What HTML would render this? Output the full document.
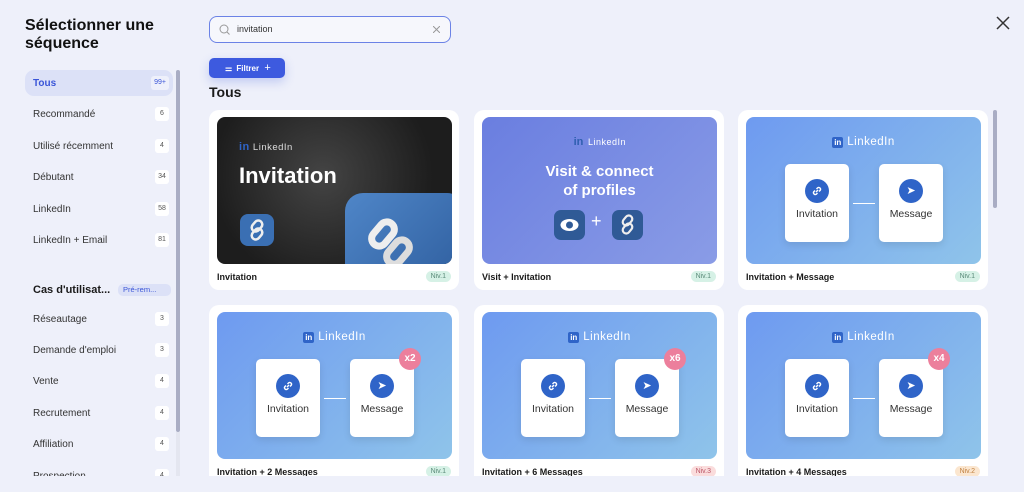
<!DOCTYPE html>
<html><head><meta charset="utf-8"><style>
*{box-sizing:border-box;margin:0;padding:0}
body{width:1024px;height:492px;overflow:hidden;background:#eef0fa;font-family:"Liberation Sans",sans-serif;position:relative;color:#1a1a1a}
.h1{position:absolute;left:25px;top:17px;font-size:16px;font-weight:bold;line-height:18px;color:#111}
.nav{position:absolute;left:25px;width:148px;height:26px;border-radius:9px;font-size:10px;color:#333;line-height:28px;padding-left:8px}
.nav .c{position:absolute;right:4px;top:6px;height:14px;min-width:14px;padding:0 3px;line-height:14px;font-size:7px;background:#fff;border-radius:3px;text-align:center;color:#555}
.act{background:#dce1f7;color:#3a55d8;font-weight:bold}
.act .c{background:#eef0fb;color:#3a55d8;font-weight:normal}
.sb{position:absolute;left:176px;top:70px;width:4px;height:362px;background:#a9adc4;border-radius:2px}
.sbt{position:absolute;left:176px;top:432px;width:4px;height:44px;background:#e4e6f0}
.search{position:absolute;left:209px;top:16px;width:242px;height:27px;border:1.5px solid #6b82e6;border-radius:8px;background:#f6f7fc}
.search span{position:absolute;left:27px;top:7px;font-size:9px;color:#333}
.btn{position:absolute;left:209px;top:58px;width:76px;height:20px;background:#3d5adf;border-radius:5px;color:#fff;font-size:8px;font-weight:bold;line-height:20px;box-shadow:0 4px 10px rgba(61,90,223,.25)}
.tous{position:absolute;left:209px;top:84px;font-size:14px;font-weight:bold}
.card{position:absolute;width:250px;height:180px;background:#fff;border-radius:10px}
.img{position:absolute;left:8px;top:7px;width:235px;height:147px;border-radius:8px;overflow:hidden}
.t{position:absolute;left:8px;top:162px;font-size:9px;font-weight:bold}
.niv{position:absolute;right:8px;top:161px;height:11px;padding:0 5px;border-radius:6px;font-size:7px;line-height:11px;background:#d6f1e6;color:#5a8a78}
.blue{background:linear-gradient(135deg,#6e9af0,#8fc4ea)}
.li{position:absolute;top:19px;left:0;width:100%;text-align:center;color:#fff;font-size:11.5px;letter-spacing:.5px}
.li b{display:inline-block;width:11px;height:11px;background:#2f64c8;border-radius:2px;font-size:8px;line-height:11px;margin-right:4px;vertical-align:0;letter-spacing:0}
.box{position:absolute;top:47px;width:64px;height:78px;background:#fff;border-radius:5px;box-shadow:0 3px 8px rgba(0,0,0,.1);text-align:center;font-size:10.5px;color:#333}
.box i{display:block;width:24px;height:24px;margin:15px auto 5px;background:#2f64c8;border-radius:50%;color:#fff;font-style:normal;font-size:11px;line-height:24px}
.box svg{margin-top:6px}
.line{position:absolute;left:107px;top:86px;width:22px;height:1px;background:#fff}
.x{position:absolute;left:182px;top:36px;width:22px;height:22px;border-radius:50%;background:#ec7f9c;color:#fff;font-size:10px;font-weight:bold;line-height:22px;text-align:center}
.msb{position:absolute;left:993px;top:110px;width:4px;height:98px;background:#a9adc4;border-radius:2px}
</style></head><body>
<div class="h1">Sélectionner une<br>séquence</div>
<div class="nav act" style="top:70px">Tous<span class="c">99+</span></div>
<div class="nav" style="top:101px">Recommandé<span class="c">6</span></div>
<div class="nav" style="top:133px">Utilisé récemment<span class="c">4</span></div>
<div class="nav" style="top:164px">Débutant<span class="c">34</span></div>
<div class="nav" style="top:196px">LinkedIn<span class="c">58</span></div>
<div class="nav" style="top:227px">LinkedIn + Email<span class="c">81</span></div>
<div style="position:absolute;left:33px;top:284px;font-size:11px;font-weight:bold">Cas d'utilisat...</div>
<div style="position:absolute;left:118px;top:284px;width:53px;height:12px;border-radius:5px;background:#dce1f7;color:#3a55d8;font-size:7.5px;line-height:12px;padding-left:5px">Pré-rem...</div>
<div class="nav" style="top:306px">Réseautage<span class="c">3</span></div>
<div class="nav" style="top:337px">Demande d'emploi<span class="c">3</span></div>
<div class="nav" style="top:368px">Vente<span class="c">4</span></div>
<div class="nav" style="top:400px">Recrutement<span class="c">4</span></div>
<div class="nav" style="top:431px">Affiliation<span class="c">4</span></div>
<div class="nav" style="top:463px;height:13px;overflow:hidden">Prospection<span class="c">4</span></div>
<div class="sb"></div><div class="sbt"></div>
<div class="search"><svg style="position:absolute;left:9px;top:7px" width="11" height="11" viewBox="0 0 11 11"><circle cx="5" cy="5" r="4" fill="none" stroke="#999" stroke-width="1"/><path d="M8 8l2.5 2.5" stroke="#999"/></svg><span>invitation</span><svg style="position:absolute;right:10px;top:9px" width="7" height="7"><path d="M0 0L7 7M7 0L0 7" stroke="#999"/></svg></div>
<div class="btn"><span style="margin-left:16px">⚌</span> <span style="margin-left:2px">Filtrer</span> <span style="font-weight:normal;font-size:11px;margin-left:3px">+</span></div>
<div class="tous">Tous</div>
<svg style="position:absolute;left:996px;top:16px" width="14" height="14"><path d="M1 1L13 13M13 1L1 13" stroke="#333" stroke-width="1.5"/></svg>
<div style="position:absolute;left:0;top:0;width:1024px;height:476px;overflow:hidden">
<div class="card" style="left:209px;top:110px"><div class="img" style="background:radial-gradient(circle at 45% 40%,#444,#1d1d1d 70%)">
<div style="position:absolute;left:22px;top:24px;color:#ddd;font-size:9.5px;letter-spacing:.5px"><b style="color:#2f64c8;font-size:11px">in</b> LinkedIn</div>
<div style="position:absolute;left:22px;top:46px;color:#fff;font-size:22px;font-weight:bold">Invitation</div>
<div style="position:absolute;left:128px;top:76px;width:120px;height:100px;border-radius:18px;background:linear-gradient(135deg,#4f86c8,#2d5c9c)"></div>
<div style="position:absolute;left:155px;top:100px;width:22px;height:34px;border:7px solid #eee;border-radius:12px;transform:rotate(40deg)"></div>
<div style="position:absolute;left:170px;top:118px;width:22px;height:34px;border:7px solid #ddd;border-radius:12px;transform:rotate(40deg)"></div>
<div style="position:absolute;left:23px;top:97px;width:34px;height:32px;border-radius:8px;background:#3a6fb3"><svg width="34" height="32" viewBox="0 0 34 32"><rect x="13" y="6" width="8" height="12" rx="4" fill="none" stroke="#eee" stroke-width="2.5" transform="rotate(40 17 12)"/><rect x="13" y="14" width="8" height="12" rx="4" fill="none" stroke="#eee" stroke-width="2.5" transform="rotate(40 17 20)"/></svg></div>
</div><div class="t">Invitation</div><div class="niv">Niv.1</div></div>

<div class="card" style="left:474px;top:110px"><div class="img" style="background:linear-gradient(135deg,#6a7ee0,#8a9ce6)">
<div class="li" style="top:20px;font-size:9px"><b style="background:none;color:#2f5fb0;font-size:11px;font-weight:bold">in</b>LinkedIn</div>
<div style="position:absolute;top:45px;width:100%;text-align:center;color:#fff;font-size:15px;font-weight:bold;line-height:19px">Visit &amp; connect<br>of profiles</div>
<div style="position:absolute;left:72px;top:93px;width:31px;height:30px;border-radius:7px;background:#2f5a96"><svg width="31" height="30"><ellipse cx="15.5" cy="15" rx="9" ry="6" fill="#fff"/><circle cx="15.5" cy="15" r="3.5" fill="#2f5a96"/></svg></div>
<div style="position:absolute;left:109px;top:94px;color:#fff;font-size:18px">+</div>
<div style="position:absolute;left:130px;top:93px;width:31px;height:30px;border-radius:7px;background:#2f5a96"><svg width="31" height="30"><rect x="12" y="5" width="7" height="11" rx="3.5" fill="none" stroke="#eee" stroke-width="2.2" transform="rotate(40 15.5 10.5)"/><rect x="12" y="13" width="7" height="11" rx="3.5" fill="none" stroke="#eee" stroke-width="2.2" transform="rotate(40 15.5 18.5)"/></svg></div>
</div><div class="t">Visit + Invitation</div><div class="niv">Niv.1</div></div>

<div class="card" style="left:738px;top:110px"><div class="img blue"><div class="li"><b>in</b>LinkedIn</div>
<div class="box" style="left:39px"><i><svg width="12" height="12" viewBox="0 0 12 12"><path d="M5 7L7 5M4 5.5L2.8 6.7a1.8 1.8 0 0 0 2.5 2.5L6.5 8M8 6.5l1.2-1.2a1.8 1.8 0 0 0-2.5-2.5L5.5 4" fill="none" stroke="#fff" stroke-width="1.4"/></svg></i>Invitation</div><div class="line"></div><div class="box" style="left:133px"><i>➤</i>Message</div>
</div><div class="t">Invitation + Message</div><div class="niv">Niv.1</div></div>

<div class="card" style="left:209px;top:305px"><div class="img blue"><div class="li"><b>in</b>LinkedIn</div>
<div class="box" style="left:39px"><i><svg width="12" height="12" viewBox="0 0 12 12"><path d="M5 7L7 5M4 5.5L2.8 6.7a1.8 1.8 0 0 0 2.5 2.5L6.5 8M8 6.5l1.2-1.2a1.8 1.8 0 0 0-2.5-2.5L5.5 4" fill="none" stroke="#fff" stroke-width="1.4"/></svg></i>Invitation</div><div class="line"></div><div class="box" style="left:133px"><i>➤</i>Message</div><div class="x">x2</div>
</div><div class="t">Invitation + 2 Messages</div><div class="niv">Niv.1</div></div>

<div class="card" style="left:474px;top:305px"><div class="img blue"><div class="li"><b>in</b>LinkedIn</div>
<div class="box" style="left:39px"><i><svg width="12" height="12" viewBox="0 0 12 12"><path d="M5 7L7 5M4 5.5L2.8 6.7a1.8 1.8 0 0 0 2.5 2.5L6.5 8M8 6.5l1.2-1.2a1.8 1.8 0 0 0-2.5-2.5L5.5 4" fill="none" stroke="#fff" stroke-width="1.4"/></svg></i>Invitation</div><div class="line"></div><div class="box" style="left:133px"><i>➤</i>Message</div><div class="x">x6</div>
</div><div class="t">Invitation + 6 Messages</div><div class="niv" style="background:#fadcdc;color:#b56">Niv.3</div></div>

<div class="card" style="left:738px;top:305px"><div class="img blue"><div class="li"><b>in</b>LinkedIn</div>
<div class="box" style="left:39px"><i><svg width="12" height="12" viewBox="0 0 12 12"><path d="M5 7L7 5M4 5.5L2.8 6.7a1.8 1.8 0 0 0 2.5 2.5L6.5 8M8 6.5l1.2-1.2a1.8 1.8 0 0 0-2.5-2.5L5.5 4" fill="none" stroke="#fff" stroke-width="1.4"/></svg></i>Invitation</div><div class="line"></div><div class="box" style="left:133px"><i>➤</i>Message</div><div class="x">x4</div>
</div><div class="t">Invitation + 4 Messages</div><div class="niv" style="background:#fbe6cf;color:#c08040">Niv.2</div></div>
</div>
<div class="msb"></div>
</body></html>
